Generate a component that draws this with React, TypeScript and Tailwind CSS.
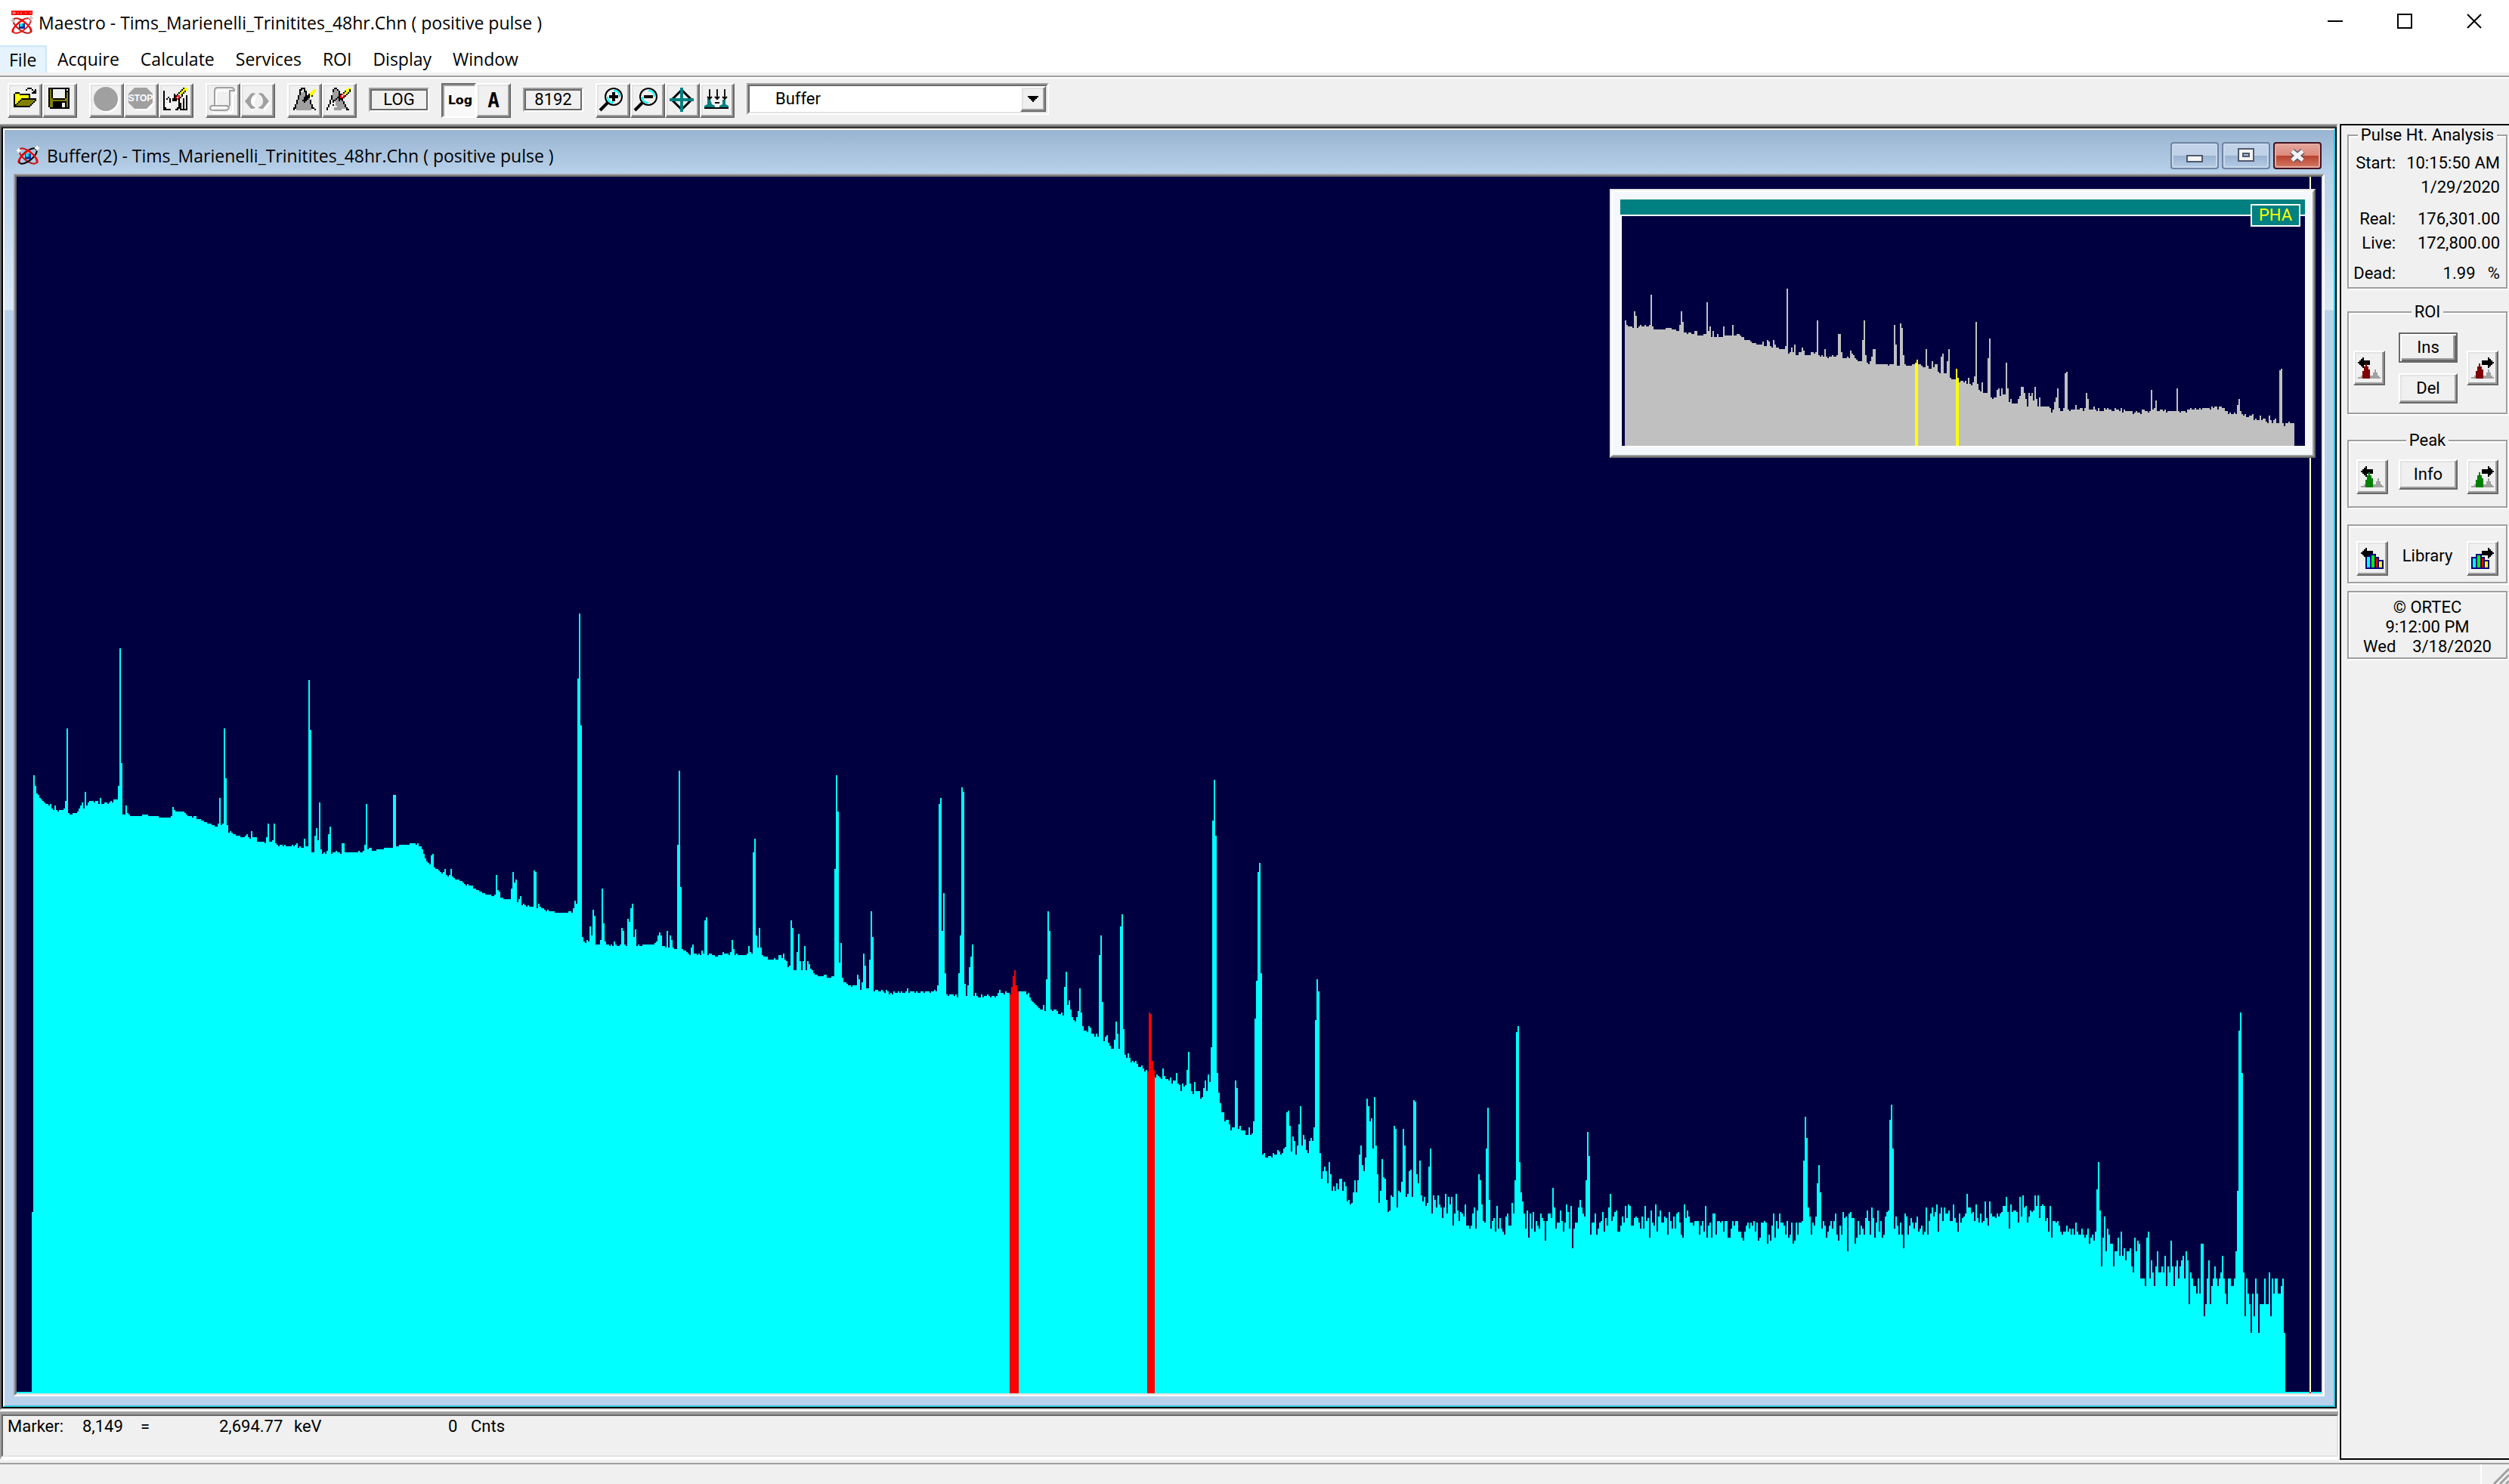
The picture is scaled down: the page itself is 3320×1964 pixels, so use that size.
import type { ReactNode } from 'react'

const PALETTE: Record<string, string> = {
  K: '#000000', Y: '#ffff00', O: '#808000', W: '#ffffff', G: '#a0a0a0', R: '#ff0000',
  D: '#800000', E: '#008000', B: '#000080', C: '#00ffff', L: '#00ff00',
}

function Pixels({ rows, x = 0, y = 0 }: { rows: string[]; x?: number; y?: number }) {
  return (
    <g shapeRendering="crispEdges">
      {rows.flatMap((row, r) =>
        row.split('').map((c, i) =>
          PALETTE[c] ? <rect key={`${r}-${i}`} x={x + i} y={y + r} width="1" height="1" fill={PALETTE[c]} /> : null
        )
      )}
    </g>
  )
}

const OPEN = [
  '.........KKK...',
  '........K...K.K',
  '.............KK',
  '.KKK........KKK',
  'KYYYKKKKKKK....',
  'KYYYYYYYYYK....',
  'KYYYYYYYYYK....',
  'KYYYYKKKKKKKKKK',
  'KYYYKOOOOOOOOOK',
  'KYYKOOOOOOOOOK.',
  'KYKOOOOOOOOOK..',
  'KKOOOOOOOOOK...',
  'KKKKKKKKKKK....',
]

const SAVE = [
  'KKKKKKKKKKKKKK',
  'KOK........K.K',
  'KOK........KKK',
  'KOK........KOK',
  'KOK........KOK',
  'KOK........KOK',
  'KOK........KOK',
  'KOOKKKKKKKKOOK',
  'KOOOOOOOOOOOOK',
  'KOOKKKKKKKKKOK',
  'KOOKKKKKK..KOK',
  'KOOKKKKKK..KOK',
  'KOOKKKKKK..KOK',
  '.KKKKKKKKKKKKK',
]

const CLEAR = [
  '.............KYY',
  '............KYYY',
  'K..........KYYK.',
  'K.........KYYK..',
  'K......K.KWYK...',
  'K......KKRRWK..K',
  'K..K...KRWRK...K',
  'K.K.K.KKKRK..K.K',
  'K...K.KKK.K..K.K',
  'K...K.....K..K.K',
  'K..W......KK.K.K',
  'K.WWW.....KK.K.K',
  'K.WWW.....KK.K.K',
  'KK.......KKK.K.K',
  'KKKKK...KK.KKKKK',
]

const MARK = [
  '.....KKK.......',
  '....KK.K.....YY',
  '....K..KK...YYY',
  '....KGGGK..YYY.',
  '....KGGGK.KYY..',
  '...KGGGGKKKYK..',
  '...KGGGKKKK....',
  '...KGGGKKKG....',
  '..KGGGKKKGGK...',
  '..KGGGGKGGGK...',
  '..KGGGGGGGGK...',
  '.KGGGGGGGGGGK..',
  '.KGGGGGGGGGGK..',
  'KKGGGGGGGGGGKK.',
  'K.GGGGGGGGGG..K',
]

const UNMARK = [
  '.....KK.......YY',
  '....KGGK.....YYK',
  '....KGGGK...KYYK',
  '....GGGGK..KYYK.',
  '....GGGGKKRWYK..',
  '...KGGGGKRWRK...',
  '...KGGGKKRRK....',
  '...KGGKGKKK.....',
  '..K.KKGGKGK.....',
  '..K.K.GGGGGK....',
  '..K...GGGGGK....',
  '.K..K.GGGGGGK...',
  '.K.....GGGGGK...',
  'K....GGGGGGGGK..',
  'K....GGGGG...KK.',
]

const peakBody = (c: string) => [
  `....${c}${c}${c}........`,
  `....${c}${c}${c}${c}...G...`,
  `...${c}${c}${c}${c}${c}...G...`,
  `...${c}${c}${c}${c}${c}..GGG..`,
  `...${c}${c}${c}${c}${c}..GGG..`,
  `..G${c}${c}${c}${c}${c}GGGGGG.`,
  `GGG${c}${c}${c}${c}${c}GGGGGGG`,
]

const peakLeft = (c: string) => [
  '...K...........',
  '..KK...........',
  '.KKKKKKK.......',
  'KKKKKKKK.......',
  `.KKKK${c}KK.......`,
  `..KK.${c}.........`,
  `...K${c}${c}${c}........`,
  ...peakBody(c),
]

const peakRight = (c: string) => [
  '...........K...',
  '...........KK..',
  '.......KKKKKKK.',
  '.......KKKKKKKK',
  `.....${c}.KKKKKKK.`,
  `.....${c}.....KK..`,
  `....${c}${c}${c}....K...`,
  ...peakBody(c),
]

const LIB_LEFT = [
  '...K...........',
  '..KK...........',
  '.KKKKKKK.......',
  'KKKKKKKK.......',
  '.KKKKKBBBB.....',
  '..KKBBBLLB.....',
  '...KCCBLLBBB...',
  '...BCCBLLBRB...',
  '...BCCBLLBRBBBB',
  '...BCCBLLBRBYYB',
  '...BCCBLLBRBYYB',
  '...BCCBLLBRBYYB',
  '...BCCBLLBRBYYB',
  '...BBBBBBBBBBBB',
]

const LIB_RIGHT = [
  '...........K...',
  '...........KK..',
  '.......KKKKKKK.',
  '.......KKKKKKKK',
  '...BBBBKKKKKKK.',
  '...BLLB....KK..',
  'BBBBLLBBB..K...',
  'BCCBLLBRB......',
  'BCCBLLBRBBBB...',
  'BCCBLLBRBYYB...',
  'BCCBLLBRBYYB...',
  'BCCBLLBRBYYB...',
  'BCCBLLBRBYYB...',
  'BBBBBBBBBBBB...',
]

// Spectrum runs: each pair is "column,top", held until the next pair.
// Origin and scale turn a run's own units into plot units.
type Run = { x0: number; y0: number; sx: number; sy: number; data: string }

const SPECTRUM: Run[] = [
  {
    x0: 0, y0: 780, sx: 1.96, sy: 2.904,
    data: `82,2390 86,714 90,755 94,784 98,790 102,801 106,807 110,813 114,819 118,825 125,830 129,825 133,842 137,848 141,830 145,848 149,854 153,848 165,842 169,813 172,534 176,859 180,865 188,859 200,854 204,842 208,830 212,819 216,842 220,778 223,830 227,819 231,813 243,819 247,813 255,825 259,801 263,825 270,819 278,825 282,819 286,813 290,819 294,807 306,755 310,226 314,668 318,865 325,830 329,859 333,865 337,871 368,865 384,871 412,877 443,871 447,836 451,848 455,854 478,859 482,865 486,871 498,877 502,871 510,883 521,889 529,894 537,900 549,906 557,912 564,900 568,801 572,906 576,900 580,534 584,726 588,906 592,935 596,929 600,935 604,941 612,947 623,952 635,947 639,941 643,952 647,958 651,929 655,952 666,970 686,976 690,952 694,900 698,970 706,964 710,900 714,976 718,981 721,987 725,981 733,987 737,981 741,987 757,981 761,987 765,981 768,976 772,993 776,987 780,993 788,958 792,987 800,348 804,540 808,1010 815,947 819,918 823,964 827,819 831,999 835,1016 839,1010 843,1016 847,1005 851,941 855,912 859,1016 863,1010 870,1005 874,1010 882,1016 886,976 894,1010 929,1005 933,1010 941,1005 945,981 949,825 953,999 957,993 964,1005 976,999 996,993 1019,790 1027,987 1035,981 1062,976 1078,981 1082,976 1086,987 1094,999 1098,1016 1102,1034 1106,1045 1110,1051 1114,1057 1117,1022 1121,1016 1125,1069 1129,1074 1137,1080 1141,1086 1145,1092 1149,1086 1152,1074 1156,1098 1160,1103 1164,1098 1168,1074 1172,1103 1176,1109 1180,1115 1192,1121 1200,1127 1204,1132 1208,1138 1212,1132 1215,1138 1227,1150 1235,1156 1243,1161 1250,1167 1258,1173 1274,1179 1282,1173 1286,1098 1290,1156 1294,1161 1298,1185 1305,1191 1325,1150 1329,1086 1333,1127 1337,1115 1341,1202 1345,1191 1348,1179 1352,1214 1356,1208 1360,1214 1364,1220 1368,1214 1372,1220 1384,1080 1388,1086 1392,1225 1396,1208 1400,1220 1404,1225 1411,1231 1415,1237 1419,1231 1423,1237 1439,1243 1474,1237 1482,1243 1486,1225 1490,1196 1494,1208 1497,343 1501,93 1505,523`,
  },
  {
    x0: 760, y0: 980, sx: 1.96, sy: 3,
    data: `20,780 24,798 28,804 31,792 35,798 39,738 43,774 47,672 51,696 55,810 67,792 71,588 74,726 78,798 82,810 90,816 94,810 98,816 102,798 106,810 110,816 118,810 122,744 126,756 129,810 133,816 137,708 141,720 145,666 149,648 153,780 157,750 161,816 165,810 169,816 177,810 208,804 212,798 216,774 220,762 223,774 227,816 235,822 239,756 243,822 247,774 251,792 255,822 259,828 267,414 270,120 274,582 278,828 282,834 290,840 294,846 298,852 302,822 306,810 310,846 318,852 321,846 325,852 329,834 333,846 337,714 341,702 345,852 349,846 357,852 365,858 372,852 384,840 388,846 400,852 404,840 408,792 412,828 416,852 419,846 423,852 447,846 451,816 455,840 459,846 463,444 466,390 470,774 474,822 478,744 482,822 486,852 490,858 502,870 517,864 521,870 529,852 537,864 541,846 545,870 549,876 553,900 557,894 561,714 564,744 568,912 576,840 580,768 584,876 588,912 592,876 596,816 600,912 604,876 608,888 612,906 616,912 619,924 623,930 631,936 647,930 655,942 666,936 674,510 678,138 682,282 686,882 690,804 694,942 698,960 706,966 710,972 717,978 721,972 733,930 737,948 741,990 745,960 749,846 753,894 757,984 764,870 768,678 772,780 776,996 780,990 788,996 796,990 800,996 804,1002 808,990 812,996 815,1008 819,1002 823,1008 827,996 831,1002 839,996 843,1002 847,996 851,1002 859,996 862,984 866,1002 870,996 882,1002 886,996 890,1002 898,996 906,1002 910,996 921,1002 925,996 933,990 937,996 941,972 945,252 949,228 953,756 956,606 960,924 964,1008 968,1014 972,1008 984,1014 988,1008 992,1020 996,924 1000,774 1004,186 1007,204 1011,966 1015,1014 1019,972 1023,900 1027,858 1031,810 1035,1014 1039,1002 1043,1014 1047,1020 1054,1008 1058,1020 1062,1014 1070,1008 1074,1014 1078,1020 1082,1014 1090,1020 1094,1014 1098,1002 1102,990 1105,1002 1113,1008 1117,996 1121,1002 1129,1008 1133,978 1137,936 1141,912 1145,972 1149,996 1172,1008 1176,1002 1180,1020 1184,1032 1188,1038 1192,1044 1196,1050 1200,1056 1204,1062 1208,1068 1215,1050 1219,1074 1223,948 1227,678 1231,756 1235,1068 1239,1074 1243,1068 1251,1074 1255,1086 1262,1080 1266,1092 1270,978 1274,918 1278,1050 1282,1032 1286,1068 1290,1098 1294,1110 1298,1116 1302,1098 1306,1074 1310,984 1313,1080 1317,1134 1321,1152 1329,1158 1333,1134 1337,1140 1341,1164 1349,1176 1352,1164 1356,1176 1360,852 1364,774 1368,1038 1372,1194 1376,1176 1380,1170 1384,1200 1388,1212 1392,1224 1400,1188 1403,1116 1407,1164 1411,1224 1415,738 1419,690 1423,1146 1427,1248 1431,1260 1435,1242 1439,1260 1443,1278 1447,1272`,
  },
  {
    x0: 1500, y0: 1000, sx: 2.24, sy: 2.306,
    data: `0,937 4,932 9,941 13,950 22,945 27,955 31,964 36,959 40,964 45,784 49,789 54,932 58,959 63,982 67,973 72,978 76,982 81,987 85,955 90,978 94,987 103,992 108,982 112,1001 117,992 125,968 130,1001 134,1005 139,1024 143,1001 148,1010 152,1005 157,959 161,904 166,1001 170,1024 175,1033 179,996 184,1024 197,1047 202,1042 206,1015 211,992 215,1024 220,973 224,996 228,890 233,198 237,74 242,244 246,968 251,1028 255,1061 260,1088 269,1116 273,1111 282,1125 287,1144 291,1134 300,992 305,1015 309,1139 314,1130 318,1144 332,1158 340,1134 345,1158 349,1153 354,1116 358,802 363,687 367,355 372,327 376,664 381,1218 385,1213 390,1227 399,1222 408,1227 412,1213 417,1218 426,1204 430,1208 435,1218 439,1213 444,1199 448,1194 452,1088 457,1084 461,1130 466,1208 470,1162 475,1176 479,1218 484,1190 488,1125 493,1070 497,1190 502,1158 506,1171 511,1204 515,1213 520,1176 524,1167 529,1176 533,1134 538,807 542,683 547,719 551,1213 556,1291 560,1268 565,1254 569,1268 574,1305 578,1241 582,1277 587,1328 591,1314 596,1328 600,1305 605,1323 609,1291 618,1328 623,1300 627,1314 632,1360 636,1356 641,1370 645,1365 650,1333 654,1296 659,1333 663,1296 668,1218 672,1190 677,1250 681,1268 686,1227 690,1047 695,1070 699,1116 703,1107 708,1199 712,1042 717,1190 721,1277 726,1365 730,1328 735,1231 739,1287 744,1291 748,1356 753,1393 757,1388 762,1342 766,1347 771,1130 775,1139 780,1379 784,1328 789,1333 793,1300 798,1139 802,1190 807,1347 811,1337 816,1268 820,1264 824,1347 829,1051 833,1056 838,1277 842,1305 847,1236 851,1342 856,1360 860,1347 865,1374 869,1365 874,1254 878,1199 883,1397 887,1342 892,1356 896,1379 901,1342 905,1370 910,1379 914,1411 919,1379 923,1337 928,1397 932,1347 937,1370 941,1347 946,1434 950,1397 955,1337 959,1388 964,1420 968,1393 973,1397 977,1407 982,1370 986,1434 995,1443 1000,1434 1004,1397 1009,1379 1013,1443 1017,1388 1022,1277 1026,1296 1031,1370 1035,1420 1040,1425 1044,1199 1049,1075 1053,1356 1058,1443 1062,1420 1067,1411 1071,1453 1076,1374 1080,1443 1085,1411 1089,1443 1093,1453 1098,1462 1102,1407 1107,1397 1112,1434 1120,1365 1125,1397 1129,1296 1134,844 1138,826 1142,1241 1147,1333 1152,1360 1156,1397 1160,1443 1165,1388 1170,1471 1174,1397 1178,1443 1183,1393 1187,1453 1192,1420 1196,1434 1201,1443 1205,1397 1210,1411 1214,1420 1219,1480 1223,1420 1228,1397 1237,1411 1241,1319 1246,1379 1250,1443 1254,1425 1263,1388 1268,1420 1272,1453 1277,1425 1281,1370 1286,1393 1290,1443 1295,1374 1299,1503 1304,1443 1308,1425 1317,1379 1322,1356 1326,1379 1331,1397 1335,1407 1340,1296 1344,1148 1348,1222 1353,1462 1357,1425 1366,1397 1371,1462 1375,1443 1380,1425 1384,1420 1389,1393 1393,1453 1398,1411 1402,1434 1407,1379 1411,1337 1416,1420 1420,1407 1425,1393 1429,1388 1434,1453 1443,1434 1447,1407 1452,1425 1456,1374 1460,1411 1465,1370 1469,1374 1474,1434 1483,1411 1487,1407 1492,1411 1496,1425 1501,1443 1505,1407 1510,1443 1514,1374 1519,1420 1523,1411 1528,1471 1532,1388 1537,1425 1541,1434 1546,1370 1550,1453 1555,1407 1559,1388 1564,1425`,
  },
  {
    x0: 2200, y0: 1320, sx: 1.7422, sy: 2.4348,
    data: `0,726 3,706 7,711 10,765 14,691 17,721 21,745 24,706 28,745 31,696 35,691 38,726 42,765 45,774 49,667 52,711 56,687 59,706 63,726 70,735 73,721 84,765 87,735 91,721 94,755 98,672 101,774 105,735 108,726 112,774 115,696 122,765 125,721 133,726 136,721 140,755 143,721 150,774 157,745 160,721 164,735 167,721 174,755 181,774 185,784 188,755 192,735 195,726 199,745 202,726 206,735 209,721 213,755 216,726 220,784 223,774 226,726 234,721 237,726 240,794 244,765 247,784 251,735 254,696 258,774 261,721 265,745 268,696 272,726 279,735 282,765 286,721 289,774 293,765 296,726 300,794 303,784 307,726 310,765 314,726 321,721 324,526 328,385 331,453 335,677 338,706 341,765 345,726 348,735 352,706 355,599 359,541 362,628 366,745 369,721 373,735 376,774 380,755 383,735 387,721 390,745 394,721 397,696 401,765 404,784 408,735 411,765 415,691 418,711 422,706 425,818 429,696 432,691 436,711 443,794 446,774 450,721 453,765 457,735 460,745 464,765 467,711 470,687 474,721 477,765 481,677 484,711 488,774 491,726 495,687 498,755 502,721 505,774 509,765 512,706 516,691 519,687 523,394 526,346 530,487 533,745 537,706 540,735 544,765 547,726 551,765 554,808 558,696 561,706 565,765 568,735 572,711 575,726 578,745 582,726 585,706 589,755 592,745 596,735 599,765 603,755 606,677 610,765 613,721 617,696 620,677 624,706 627,691 631,667 634,755 638,696 641,677 645,721 648,677 652,696 659,687 662,721 669,667 673,711 676,726 680,755 683,696 686,726 690,711 694,706 697,696 700,633 704,677 711,696 714,691 718,721 721,667 725,711 728,726 732,696 735,726 739,721 742,657 746,711 749,735 753,657 756,696 760,706 767,711 770,696 774,706 777,696 781,691 784,672 791,643 795,691 798,745 801,667 805,691 808,687 815,691 819,726 822,643 826,706 829,638 833,677 836,672 840,726 843,706 847,687 850,691 854,687 857,638 861,672 864,638 868,711 871,672 875,667 878,672 882,721 885,711 889,755 892,672 896,774 899,721 906,726 910,721 913,735 917,755 920,765 924,755 931,735 934,755 937,745 941,765 945,745 948,765 951,726 955,755 958,765 965,745 969,765 972,774 976,765 979,745 983,794 986,774 990,765 993,784 997,755 1000,618 1004,531 1007,687 1010,867 1014,774 1017,706 1021,818 1024,745 1028,765 1031,794 1038,867 1042,818 1049,774 1052,833 1056,755 1059,833 1063,808 1066,847 1070,818 1077,808 1080,867 1084,886 1087,774 1091,818 1094,784 1098,794 1101,906 1112,930 1115,774 1119,755 1122,906 1126,847 1129,886 1133,930 1136,867 1139,818 1143,886 1150,867 1153,886 1157,833 1160,930 1164,867 1167,886 1171,784 1174,867 1178,930 1181,867 1185,847 1188,906 1192,867 1195,847 1199,833 1202,906 1206,818 1209,847 1213,989 1216,886 1220,906 1223,930 1230,954 1233,906 1237,954 1240,794 1247,1027 1251,989 1254,906 1258,847 1261,989 1265,930 1268,906 1272,867 1275,906 1279,930 1282,906 1286,886 1289,833 1293,906 1296,954 1300,989 1303,906 1310,930 1317,906 1321,818 1324,623 1328,107 1331,49 1335,243 1338,886 1342,1027 1345,906 1348,954 1352,989 1355,1081 1359,954 1362,1027 1366,906 1369,954 1373,1081 1376,989 1387,906 1390,989 1397,886 1401,1027 1404,906 1408,954 1411,906 1418,954 1425,930 1429,906 1432,1081 1436,1276`,
  },
]

const OVERVIEW: Run[] = [
  {
    x0: 2110, y0: 230, sx: 1.6, sy: 3,
    data: `64,582 67,600 70,606 80,612 83,546 86,564 90,612 93,606 96,600 99,606 106,600 109,606 115,600 118,480 122,606 125,618 150,612 163,618 173,624 179,600 182,546 186,588 189,630 195,636 198,630 205,636 211,624 218,642 230,636 237,510 240,624 243,606 246,648 250,624 253,648 259,636 262,648 272,606 275,642 291,600 294,642 301,636 307,642 310,648 317,660 330,666 333,672 342,678 355,666 358,684 365,660 368,666 371,684 374,690 378,660 381,678 384,690 390,696 403,684 406,456 410,714 413,708 416,690 419,708 422,678 426,720 432,708 438,690 442,702 445,720 458,708 464,714 467,708 470,582 474,720 477,726 480,720 483,726 486,696 490,726 493,732 496,726 502,720 506,726 512,720 515,636 522,708 525,732 534,726 538,732 541,702 544,714 547,720 550,732 554,738 557,744 566,660 570,582 573,720 576,750 579,756 582,744 586,726 589,696 595,756 621,762 624,756 634,600 637,678 640,762 646,594 650,612 653,720 656,756 659,762 672,756 678,750 682,738 685,756 691,762 694,768 701,696 704,762 707,774 714,744 717,768 720,756 726,786 730,792 733,726 736,714 739,792 746,744 749,696 752,810 755,816 765,774 768,810 771,828 774,822 781,828 784,822 787,834 790,810 794,834 797,840 800,828 803,804 806,588 810,834 813,858 816,864 819,828 822,870 832,732 835,654 838,888 842,894 845,888 851,858 854,852 858,882 861,852 864,876 870,750 874,852 877,906 880,894 883,912 896,894 899,882 902,846 909,870 912,894 915,924 918,870 922,882 925,870 928,900 931,846 934,894 938,924 941,888 944,924 963,930 966,948 970,936 973,906 976,888 979,852 982,930 986,942 992,930 995,792 998,786 1002,936 1005,942 1008,936 1018,918 1021,936 1027,930 1034,942 1037,930 1040,870 1043,894 1046,936 1056,924 1059,936 1063,942 1066,930 1069,942 1078,930 1082,936 1085,930 1088,936 1094,942 1101,930 1104,936 1110,942 1114,930 1117,948 1120,936 1123,942 1139,954 1142,948 1146,942 1149,948 1155,954 1158,936 1165,942 1171,948 1174,942 1178,858 1181,936 1184,930 1187,900 1190,942 1197,936 1203,942 1206,936 1210,948 1213,942 1232,852 1235,942 1238,948 1242,942 1251,948 1254,936 1261,930 1264,936 1270,930 1274,936 1280,930 1283,936 1286,930 1302,936 1306,924 1309,930 1312,924 1318,936 1322,924 1328,930 1334,942 1341,954 1344,948 1347,954 1354,948 1357,954 1360,918 1363,894 1366,942 1370,954 1373,960 1376,954 1379,966 1386,960 1392,954 1395,978 1398,972 1402,978 1408,960 1411,978 1414,972 1421,984 1424,990 1427,960 1430,978 1434,990 1437,978 1440,972 1443,990 1450,780 1453,774 1456,990 1459,1002 1462,990 1469,984 1472,990 1482,1080`,
  },
]

function stepPath(runs: Run[], floor: number) {
  const even = (n: number) => Math.round(n / 2) * 2
  let d = ''
  for (const run of runs) {
    for (const pair of run.data.split(' ')) {
      const [px, py] = pair.split(',').map(Number)
      const x = even(run.x0 + px / run.sx)
      const y = even(run.y0 + py / run.sy)
      d += d ? `H${x}V${y}` : `M${x} ${floor}V${y}`
    }
  }
  return `${d}V${floor}Z`
}

const SPECTRUM_PATH = stepPath(SPECTRUM, 1844)
const OVERVIEW_PATH = stepPath(OVERVIEW, 590)

function Spectrum() {
  return (
    <svg className="absolute inset-0 h-full w-full" viewBox="22 234 3050 1610" preserveAspectRatio="none" shapeRendering="crispEdges">
      <defs>
        <clipPath id="roi">
          <rect x="1336" y="234" width="12" height="1610" />
          <rect x="1518" y="234" width="10" height="1610" />
        </clipPath>
      </defs>
      <path d={SPECTRUM_PATH} fill="#00ffff" />
      <rect x="22" y="1842" width="3050" height="2" fill="#00ffff" />
      <path d={SPECTRUM_PATH} fill="#ff0000" clipPath="url(#roi)" />
      <rect x="3056" y="234" width="2" height="1608" fill="#ffffc0" />
      <rect x="3056" y="1842" width="2" height="2" fill="#ff0000" />
    </svg>
  )
}

function Overview() {
  return (
    <div className="absolute right-2 top-4 h-[356px] w-[934px] border-2 border-b-[#696969] border-l-[#e3e3e3] border-r-[#696969] border-t-[#e3e3e3]">
      <div className="flex h-full flex-col border-2 border-b-[#a0a0a0] border-l-white border-r-[#a0a0a0] border-t-white bg-[#f4f7fc] px-[10px] py-[10px]">
        <div className="relative flex min-h-0 flex-1 flex-col">
          <div className="h-5 bg-[#008080]" />
          <svg className="min-h-0 w-full flex-1 border-y-2 border-l-2 border-white bg-[#000040]" viewBox="2146 286 904 304" preserveAspectRatio="none" shapeRendering="crispEdges">
            <defs>
              <clipPath id="roi-mini">
                <rect x="2534" y="286" width="4" height="304" />
                <rect x="2588" y="286" width="4" height="304" />
              </clipPath>
            </defs>
            <path d={OVERVIEW_PATH} fill="#c0c0c0" />
            <path d={OVERVIEW_PATH} fill="#ffff00" clipPath="url(#roi-mini)" />
          </svg>
          <div className="absolute right-[6px] top-[6px] flex h-[30px] w-[66px] items-center justify-center border-2 border-white bg-[#008080] text-[22px] leading-[26px] text-[#ffff00]">
            PHA
          </div>
        </div>
      </div>
    </div>
  )
}

function AtomIcon({ brand = false }: { brand?: boolean }) {
  const top = brand ? '#e02020' : '#000000'
  return (
    <svg className={brand ? 'h-8 w-[30px] shrink-0' : 'h-[26px] w-[30px] shrink-0'} viewBox={brand ? '0 0 30 32' : '0 7 30 25'} preserveAspectRatio="none">
      {brand && <rect x="1" y="0" width="28" height="6" fill="#ff0000" />}
      {brand && <path d="M3 2h3v2h-3zM9 3h2M14 2v3M19 3h2M25 3h3" stroke="#ffb0b0" strokeWidth="1" fill="none" />}
      <g fill="none" strokeWidth="2">
        <ellipse cx="15" cy="20" rx="14" ry="6" transform="rotate(38 15 20)" stroke="#c01818" />
        <ellipse cx="15" cy="20" rx="14" ry="6" transform="rotate(-38 15 20)" stroke={top} />
        <path d="M3 29c-3-4 6-12 14-17M27 29c3-5-6-12-14-17" stroke="#ff0000" />
      </g>
      <path d="M0 13h6M3 10v6M24 10h6M27 7v6" stroke={brand ? '#c8c8c8' : '#ffffff'} strokeWidth="2" />
      <rect x="11" y="17" width="8" height="7" fill="#0a2f9c" />
      <rect x="12" y="17" width="4" height="4" fill="#00e5ff" />
    </svg>
  )
}

const RAISED = 'border-2 border-b-[#696969] border-l-white border-r-[#696969] border-t-white shadow-[inset_-2px_-2px_0_#a0a0a0,inset_2px_2px_0_#e3e3e3] bg-[#f0f0f0]'

function ToolButton({ label, children }: { label: string; children: ReactNode }) {
  return (
    <button aria-label={label} className={`flex h-[46px] w-[46px] items-center justify-center ${RAISED}`}>
      {children}
    </button>
  )
}

function Icon({ children }: { children: ReactNode }) {
  return <svg className="h-[42px] w-[42px]" viewBox="0 0 21 21">{children}</svg>
}

function Readout({ children }: { children: ReactNode }) {
  return (
    <div className="mt-[6px] h-8 w-20 border-2 border-b-white border-l-[#a0a0a0] border-r-white border-t-[#a0a0a0]">
      <div className="flex h-full items-center justify-center border-2 border-[#696969] text-[22px] leading-6">{children}</div>
    </div>
  )
}

function Toolbar() {
  return (
    <div className="flex h-[60px] items-start gap-4 bg-[#f0f0f0] pl-[10px] pt-[6px]">
      <div className="flex">
        <ToolButton label="Open"><Icon><Pixels rows={OPEN} x={3} y={2} /></Icon></ToolButton>
        <ToolButton label="Save"><Icon><Pixels rows={SAVE} x={3} y={2} /></Icon></ToolButton>
      </div>
      <div className="flex">
        <ToolButton label="Start">
          <Icon>
            <circle cx="11" cy="10.5" r="8" fill="#fff" />
            <circle cx="10" cy="9.5" r="8" fill="#a0a0a0" />
          </Icon>
        </ToolButton>
        <ToolButton label="Stop">
          <Icon>
            <path d="M7 3h8l4 4v6l-4 4H7l-4-4V7z" fill="#fff" />
            <path d="M6 2h8l4 4v6l-4 4H6l-4-4V6z" fill="#a0a0a0" />
            <text x="10" y="11" textAnchor="middle" fontSize="6" fontWeight="bold" fill="#fff" fontFamily="Liberation Sans, sans-serif">STOP</text>
          </Icon>
        </ToolButton>
        <ToolButton label="Clear"><Icon><Pixels rows={CLEAR} x={2} y={2} /></Icon></ToolButton>
      </div>
      <div className="flex">
        <ToolButton label="Job">
          <Icon>
            <g fill="none" strokeWidth="1">
              <path d="M5 14V5q0-2 2-2h9q2 0 2 2h-2M16 5v9M3 14h11v2q0 2-2 2H4q-2-1-1-4M16 14v2q0 2-3 2" transform="translate(1 1)" stroke="#fff" />
              <path d="M5 14V4q0-2 2-2h9q2 0 2 2h-3v10M2.500 14h11v1M14.500 14v1q0 2-3 2H4q-3 0-1.500-3" stroke="#a0a0a0" />
            </g>
          </Icon>
        </ToolButton>
        <ToolButton label="Calibrate">
          <Icon>
            <path d="M3 12l5-6v3h0q1-2 2-2l-2 5 2 4q-3 0-3 2zM19 12l-5-6v3q-1-2-2-2l2 5-2 4q3 0 3 2z" fill="#fff" />
            <path d="M2 11l4-5q2-1 3 0-3 2-3 5t3 4q0 1-3 1zM18 11l-4-5q-2-1-3 0 3 2 3 5t-3 4q0 1 3 1z" fill="#a0a0a0" />
          </Icon>
        </ToolButton>
      </div>
      <div className="flex">
        <ToolButton label="Mark ROI"><Icon><Pixels rows={MARK} x={3} y={2} /></Icon></ToolButton>
        <ToolButton label="Unmark ROI"><Icon><Pixels rows={UNMARK} x={2} y={2} /></Icon></ToolButton>
      </div>
      <Readout>LOG</Readout>
      <div className="flex">
        <button className="h-[46px] w-[46px] border-2 border-b-white border-l-[#696969] border-r-white border-t-[#696969] bg-[#f8f8f8] pl-1 font-['DejaVu_Sans'] text-[16px] font-bold shadow-[inset_2px_2px_0_#a0a0a0]">
          Log
        </button>
        <button className={`h-[46px] w-[46px] font-['DejaVu_Sans_Mono'] text-[26px] font-bold leading-[42px] ${RAISED}`}>A</button>
      </div>
      <Readout>8192</Readout>
      <div className="flex">
        <ToolButton label="Zoom in">
          <Icon>
            <path d="M2 17l5-5" stroke="#000" strokeWidth="2" />
            <circle cx="11" cy="8" r="5.500" fill="none" stroke="#000" />
            <path d="M11 4q4 0 4 4M7 8q0 4 4 4" stroke="#0ff" fill="none" />
            <path d="M8 8h6M11 5v6" stroke="#000" strokeWidth="2" />
          </Icon>
        </ToolButton>
        <ToolButton label="Zoom out">
          <Icon>
            <path d="M2 17l5-5" stroke="#000" strokeWidth="2" />
            <circle cx="11" cy="8" r="5.500" fill="none" stroke="#000" />
            <path d="M11 4q4 0 4 4M7 8q0 4 4 4" stroke="#0ff" fill="none" />
            <path d="M8 8h6" stroke="#000" strokeWidth="2" />
          </Icon>
        </ToolButton>
        <ToolButton label="Center">
          <Icon>
            <path d="M10 3.500l6.500 6.500-6.500 6.500L3.500 10z" fill="none" stroke="#000" strokeWidth="1.500" />
            <path d="M2 10h16M10 2v16" stroke="#008080" strokeWidth="2" />
          </Icon>
        </ToolButton>
        <ToolButton label="Baseline zoom">
          <Icon>
            <path d="M2 15v-1l2-1V9h2v1l1 3 2 1v1zM12 15v-1l2-1v-3h2v3l2 1v1z" fill="#008080" />
            <path d="M2 15.500h16M5.500 3v7M10.500 3v7M15.500 3v7M4 8l1.500 1.500L7 8M9 8l1.500 1.500L12 8M14 8l1.500 1.500L17 8M9 12h3" fill="none" stroke="#000" strokeWidth="0.900" />
          </Icon>
        </ToolButton>
      </div>
      <div className="relative h-[42px] w-[400px] border-2 border-b-white border-l-[#a0a0a0] border-r-white border-t-[#a0a0a0]">
        <select aria-label="Detector" className="h-full w-full appearance-none border-2 border-b-[#e3e3e3] border-l-[#696969] border-r-[#e3e3e3] border-t-[#696969] bg-white pl-[34px] text-[22px] leading-7 text-black">
          <option>Buffer</option>
        </select>
        <span className={`pointer-events-none absolute bottom-[2px] right-[2px] top-[2px] flex w-[34px] items-center justify-center ${RAISED}`}>
          <svg className="h-2 w-[14px]" viewBox="0 0 7 4" shapeRendering="crispEdges"><path d="M0 0h7v1H6v1H5v1H4v1H3V3H2V2H1V1H0z" /></svg>
        </span>
      </div>
    </div>
  )
}

const MENUS = ['File', 'Acquire', 'Calculate', 'Services', 'ROI', 'Display', 'Window']

function TitleBar() {
  return (
    <header className="flex h-[60px] items-center bg-white pl-[14px]">
      <AtomIcon brand />
      <h1 className="ml-[7px] flex-1 text-[23px] leading-8">Maestro - Tims_Marienelli_Trinitites_48hr.Chn ( positive pulse )</h1>
      <div className="flex h-[56px] self-start">
        <button aria-label="Minimize" className="flex w-[92px] items-center justify-center"><svg className="h-5 w-5" viewBox="0 0 20 20"><path d="M0 10h20" stroke="#000" strokeWidth="2" /></svg></button>
        <button aria-label="Maximize" className="flex w-[92px] items-center justify-center"><svg className="h-5 w-5" viewBox="0 0 20 20"><path d="M1 1h18v18H1z" fill="none" stroke="#000" strokeWidth="2" /></svg></button>
        <button aria-label="Close" className="flex w-[92px] items-center justify-center"><svg className="h-5 w-5" viewBox="0 0 20 20"><path d="M1 1l18 18M19 1L1 19" stroke="#000" strokeWidth="2" /></svg></button>
      </div>
    </header>
  )
}

function ChildWindow() {
  return (
    <div className="flex min-h-0 flex-1 flex-col border-2 border-black border-t-[#333333]">
      <div className="flex min-h-0 flex-1 flex-col border-2 border-b-[#2fc5e0] border-l-white border-r-[#2fc5e0] border-t-white bg-[linear-gradient(#99b4d1_0px,#b9d1ea_58px,#dbe8f5_238px,#b9d1ea_239px)] px-3 pb-3">
        <div className="flex h-[58px] items-start pl-1">
          <div className="flex flex-1 items-center pt-4">
            <AtomIcon />
            <h2 className="ml-[10px] font-['Open_Sans',sans-serif] text-[23px] leading-[36px]">Buffer(2) - Tims_Marienelli_Trinitites_48hr.Chn ( positive pulse )</h2>
          </div>
          <div className="flex gap-1 pr-1 pt-4">
            <button aria-label="Minimize child" className="flex h-9 w-16 items-center justify-center rounded-[4px] border-2 border-[#6f84a3] bg-[linear-gradient(#bfd2e8_50%,#9ab3d0_50%,#b5cce6)] shadow-[inset_0_0_0_2px_#c8d9ec]">
              <svg className="h-[22px] w-[22px]" viewBox="0 0 11 11"><path d="M.5 5.500h10v4H.5z" fill="#f4f4f4" stroke="#50586e" /></svg>
            </button>
            <button aria-label="Maximize child" className="flex h-9 w-16 items-center justify-center rounded-[4px] border-2 border-[#6f84a3] bg-[linear-gradient(#bfd2e8_50%,#9ab3d0_50%,#b5cce6)] shadow-[inset_0_0_0_2px_#c8d9ec]">
              <svg className="h-[20px] w-[22px]" viewBox="0 0 11 10"><path d="M.5 .5h10v8H.5z" fill="#f4f4f4" stroke="#50586e" /><path d="M3.500 3.500h4v2h-4z" fill="#a8bdd8" stroke="#50586e" /></svg>
            </button>
            <button aria-label="Close child" className="flex h-9 w-16 items-center justify-center rounded-[4px] border-2 border-[#431422] bg-[linear-gradient(#e5a79c,#dd8a7c_50%,#b8412c_50%,#d57a66)] shadow-[inset_0_0_0_2px_#e5aaa0]">
              <svg className="h-5 w-6" viewBox="0 0 24 20"><path d="M5 4l14 12M19 4L5 16" stroke="#50586e" strokeWidth="8" /><path d="M5 4l14 12M19 4L5 16" stroke="#f4f4f4" strokeWidth="5" /></svg>
            </button>
          </div>
        </div>
        <div className="flex min-h-0 flex-1 border-2 border-b-white border-l-[#a0a0a0] border-r-white border-t-[#a0a0a0]">
          <div className="relative min-w-0 flex-1 border-2 border-b-[#e3e3e3] border-l-[#696969] border-r-[#e3e3e3] border-t-[#696969] bg-[#000040]">
            <Spectrum />
            <Overview />
          </div>
        </div>
      </div>
    </div>
  )
}

function Group({ title, className, children }: { title?: string; className?: string; children: ReactNode }) {
  return (
    <fieldset className={`mx-0 min-w-0 border-2 border-[#a0a0a0] shadow-[inset_2px_2px_0_#fff,2px_2px_0_#fff] ${className}`}>
      {title && <legend className="mx-auto bg-[#f0f0f0] px-1 leading-[26px]">{title}</legend>}
      {children}
    </fieldset>
  )
}

function SideIcon({ label, rows, className = '' }: { label: string; rows: string[]; className?: string }) {
  return (
    <button aria-label={label} className={`flex h-[46px] w-[42px] items-center justify-center ${RAISED} ${className}`}>
      <svg className="h-7 w-[30px]" viewBox="0 0 15 14"><Pixels rows={rows} /></svg>
    </button>
  )
}

function TextButton({ children }: { children: ReactNode }) {
  return <button className={`h-10 w-[78px] leading-7 ${RAISED}`}>{children}</button>
}

function Row({ label, value }: { label?: string; value: string }) {
  return (
    <div className="flex leading-8">
      <dt className="w-[62px] text-right">{label}</dt>
      <dd className="flex-1 whitespace-pre text-right">{value}</dd>
    </div>
  )
}

function SidePanel() {
  return (
    <aside className="w-[224px] shrink-0 border-y-2 border-l-2 border-black bg-[#f0f0f0] pl-2 pr-[2px] text-[22px]">
      <Group title="Pulse Ht. Analysis">
        <dl className="pb-[2px] pr-2 pt-2">
          <Row label="Start:" value="10:15:50 AM" />
          <Row value="1/29/2020" />
          <div className="h-[10px]" />
          <Row label="Real:" value="176,301.00" />
          <Row label="Live:" value="172,800.00" />
          <div className="h-2" />
          <Row label="Dead:" value="1.99   %" />
        </dl>
      </Group>
      <Group title="ROI" className="mt-[18px]">
        <div className="flex items-center justify-end gap-3 pb-3 pr-[10px] pt-[14px]">
          <SideIcon label="Previous ROI" rows={peakLeft('D')} className="mr-[6px]" />
          <div className="flex flex-col gap-[14px]">
            <button className="h-10 w-[78px] border-2 border-[#696969] leading-7 shadow-[inset_2px_2px_0_#fff,inset_-2px_-2px_0_#696969,inset_-4px_-4px_0_#a0a0a0]">Ins</button>
            <TextButton>Del</TextButton>
          </div>
          <SideIcon label="Next ROI" rows={peakRight('D')} />
        </div>
      </Group>
      <Group title="Peak" className="mt-[22px]">
        <div className="flex items-start justify-end gap-3 pb-4 pr-[10px] pt-3">
          <SideIcon label="Previous peak" rows={peakLeft('E')} className="mr-[2px]" />
          <TextButton>Info</TextButton>
          <SideIcon label="Next peak" rows={peakRight('E')} />
        </div>
      </Group>
      <Group className="mt-[22px]">
        <div className="flex items-center justify-between pb-2 pl-[10px] pr-[10px] pt-5">
          <SideIcon label="Previous library entry" rows={LIB_LEFT} />
          <span className="pb-2">Library</span>
          <SideIcon label="Next library entry" rows={LIB_RIGHT} />
        </div>
      </Group>
      <Group className="mt-[10px]">
        <div className="whitespace-pre pb-px pt-[7px] text-center leading-[26px]">
          <p>© ORTEC</p>
          <p>9:12:00 PM</p>
          <p>{'Wed    3/18/2020'}</p>
        </div>
      </Group>
    </aside>
  )
}

function MarkerBar() {
  return (
    <div className="flex h-[64px] shrink-0 border-y-4 border-l-2 border-b-white border-l-[#a0a0a0] border-t-[#a0a0a0]">
      <div className="flex flex-1 items-start whitespace-pre border-2 border-b-[#e3e3e3] border-l-[#696969] border-r-[#e3e3e3] border-t-[#696969] pl-[6px] text-[22px] leading-7">
        <span className="w-[99px]">Marker:</span>
        <span className="w-[77px]">8,149</span>
        <span className="w-[104px]">=</span>
        <span className="w-[99px]">2,694.77</span>
        <span className="w-[204px]">keV</span>
        <span className="w-[30px]">0</span>
        <span>Cnts</span>
      </div>
    </div>
  )
}

export default function App() {
  return (
    <div className="flex h-screen flex-col bg-[#f0f0f0] font-['Roboto',sans-serif] text-black">
      <div className="bg-white font-['Open_Sans',sans-serif]">
        <TitleBar />
        <nav className="flex h-9 text-[23px] leading-9">
          {MENUS.map((m, i) => (
            <button key={m} className={i === 0 ? 'h-[38px] w-[62px] border-2 border-l-0 border-[#cce8ff] bg-[#e5f3ff] pl-3 text-left leading-[34px]' : 'px-[14px]'}>{m}</button>
          ))}
        </nav>
      </div>
      <div className="h-2 shrink-0 border-b-2 border-t-4 border-b-white border-t-[#f0f0f0] bg-[#a0a0a0]" />
      <Toolbar />
      <div className="flex min-h-0 flex-1">
        <main className="flex min-w-0 flex-1 flex-col border-r-2 border-white">
          <div className="flex min-h-0 flex-1 flex-col border-b-2 border-r-2 border-t-2 border-b-white border-r-[#e3e3e3] border-t-[#a0a0a0]">
            <div className="flex min-h-0 flex-1 flex-col border-b-2 border-l-2 border-t-2 border-b-[#e3e3e3] border-l-[#696969] border-t-[#696969]">
              <ChildWindow />
            </div>
          </div>
          <MarkerBar />
        </main>
        <SidePanel />
      </div>
      <footer className="mt-1 flex h-7 shrink-0 justify-end border-t-2 border-[#a0a0a0]">
        <div className="flex w-[38px] items-end justify-end border-l-2 border-white">
          <svg className="h-6 w-6" viewBox="0 0 24 24"><path d="M4 24L24 4M12 24L24 12M20 24l4-4" stroke="#a0a0a0" strokeWidth="3" /></svg>
        </div>
      </footer>
    </div>
  )
}
